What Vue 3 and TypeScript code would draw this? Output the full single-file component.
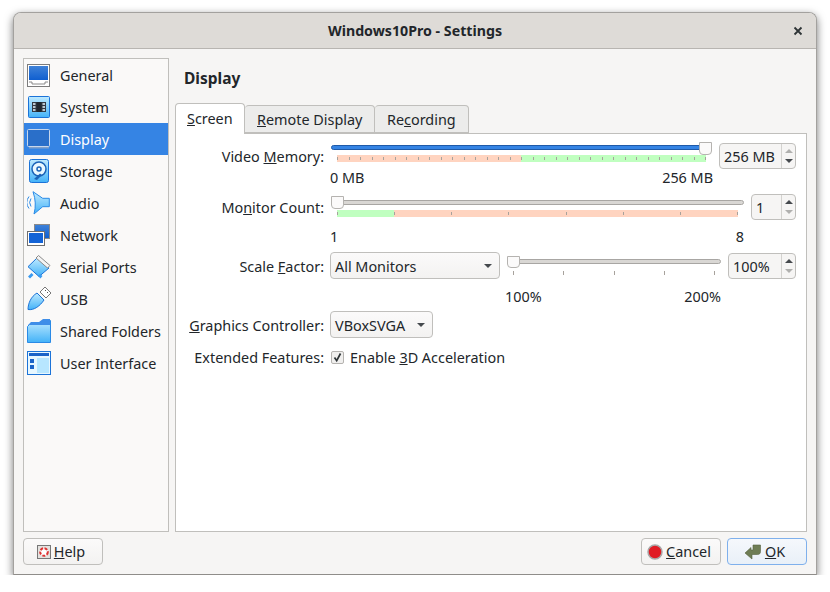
<script lang="ts" setup>
const nav = [
  'General', 'System', 'Display', 'Storage', 'Audio',
  'Network', 'Serial Ports', 'USB', 'Shared Folders', 'User Interface',
]
const active = 'Display'
</script>

<template>
  <div class="window">
    <header class="titlebar">
      <span class="title">Windows10Pro - Settings</span>
      <svg class="close" width="10" height="10" viewBox="0 0 10 10">
        <path d="M1.5 1.5l7 7M8.5 1.5l-7 7" stroke="#2e3436" stroke-width="1.8" fill="none" />
      </svg>
    </header>

    <div class="body">
      <div class="main">
        <ul class="sidebar">
          <li v-for="item in nav" :key="item" class="nav-item" :class="{ active: item === active }">
            <svg class="nav-icon" width="24" height="24" viewBox="0 0 24 24">
              <defs>
                <linearGradient id="blue" x1="0" y1="0" x2="0" y2="1">
                  <stop offset="0" stop-color="#3f82d8" />
                  <stop offset="1" stop-color="#0f5fd0" />
                </linearGradient>
                <linearGradient id="sky" x1="0" y1="0" x2="0" y2="1">
                  <stop offset="0" stop-color="#bfeaff" />
                  <stop offset="1" stop-color="#43b2f8" />
                </linearGradient>
              </defs>
              <template v-if="item === 'General'">
                <rect x="0.5" y="1.5" width="22" height="22" fill="#fff" stroke="#7c7c7c" />
                <rect x="2" y="3" width="19" height="14" fill="url(#blue)" />
                <path d="M2 19h3v2h13v-2h3" fill="none" stroke="#8a8a8a" />
              </template>
              <template v-else-if="item === 'System'">
                <rect x="1.5" y="1.5" width="21" height="21" rx="1" fill="url(#sky)" stroke="#1b73d8" />
                <rect x="5" y="7" width="14" height="10" fill="#333a44" />
                <rect x="9.5" y="7" width="5" height="10" fill="#20262e" />
                <path d="M6 9h2.500M6 12h2.500M6 15h2.500M15.500 9H18M15.500 12H18M15.500 15H18" stroke="#eaf8ff" stroke-width="1.300" />
              </template>
              <template v-else-if="item === 'Display'">
                <path d="M2 19h20v2.500H2z" fill="#7f9fca" />
                <rect x="0.5" y="2.500" width="22" height="17" rx="1" fill="#2a6fc9" stroke="#c8d7ec" />
              </template>
              <template v-else-if="item === 'Storage'">
                <rect x="2.500" y="0.500" width="19" height="23" rx="2" fill="url(#sky)" stroke="#1b73d8" />
                <circle cx="12" cy="10" r="7" fill="#eaf8ff" stroke="#1b63b8" stroke-width="1.500" />
                <circle cx="12" cy="10" r="2" fill="none" stroke="#1b63b8" stroke-width="1.500" />
                <path d="M7 20l6-5.500 2 1.500-5 5z" fill="#1b63b8" />
              </template>
              <template v-else-if="item === 'Audio'">
                <path d="M6 .7L15.700 7.300h6.600v8.400h-6.600L7 23Q10 12 6 .7z" fill="url(#sky)" stroke="#2a8ae6" />
                <path d="M4 7.500a7 7 0 0 0 0 8M2 5.500a10 10 0 0 0 0 12" fill="none" stroke="#2a8ae6" />
              </template>
              <template v-else-if="item === 'Network'">
                <rect x="7.500" y="1.500" width="15" height="14" fill="url(#blue)" stroke="#8a8a8a" />
                <rect x="0.500" y="8.500" width="17" height="14" fill="#fff" stroke="#6f6f6f" />
                <rect x="2" y="10" width="14" height="10" fill="#1363d6" />
              </template>
              <template v-else-if="item === 'Serial Ports'">
                <path d="M1 11.700L10 3l12 10-10 8.500z" fill="url(#sky)" stroke="#1b73d8" />
                <path d="M11.500 .5L23 10.500l-2.500 2.500L9 3z" fill="#f4f4f4" stroke="#8a8a8a" />
                <path d="M1 21.500l3.500-3.500 2 2-3.500 3.500zM11 21l2-2 2.500 2-2 2.500z" fill="#3a9af0" />
              </template>
              <template v-else-if="item === 'USB'">
                <path d="M1 22.500c0-6 3-13 9-16.500l7 7c-4 6-10 10.500-16 9.500z" fill="url(#sky)" stroke="#1b73d8" />
                <path d="M13 5l5-5 6 6-5 5z" fill="#fff" stroke="#777" />
                <path d="M18 4l1-1M20 6l1-1" stroke="#555" />
              </template>
              <template v-else-if="item === 'Shared Folders'">
                <path d="M0.500 23.500V7.500l4-4h8l4-2h7v22z" fill="url(#sky)" stroke="#2a8ae6" />
                <path d="M12 3l4-3h7v6H1l3-3z" fill="#3f8ee8" />
              </template>
              <template v-else>
                <rect x="0.500" y="0.500" width="23" height="23" fill="#e7f7ff" stroke="#1b73d8" />
                <rect x="2" y="2" width="20" height="3" fill="#1b63c8" />
                <rect x="10" y="7" width="12" height="15" fill="#b7e6ff" />
                <rect x="3" y="8" width="4" height="4" fill="#1b63c8" />
                <rect x="3" y="14" width="4" height="4" fill="#1b63c8" />
              </template>
            </svg>
            <span>{{ item }}</span>
          </li>
        </ul>

        <section class="content">
          <h2 class="heading">Display</h2>
          <div class="tabs">
            <div class="tab current"><u>S</u>creen</div>
            <div class="tab"><u>R</u>emote Display</div>
            <div class="tab">Re<u>c</u>ording</div>
          </div>
          <div class="pane">
            <div class="form">
              <label class="lbl">Video <u>M</u>emory:</label>
              <div class="ctl">
                <div class="slider vm-slider">
                  <div class="track filled" />
                  <div class="thumb at-end" />
                  <div class="bar bar-half">
                    <i v-for="n in 33" :key="n" />
                  </div>
                </div>
                <div class="spin w77">
                  <span class="val">256 MB</span>
                  <span class="arrows"><b class="up off" /><b class="down" /></span>
                </div>
              </div>

              <span />
              <div class="range vm"><span>0 MB</span><span>256 MB</span></div>

              <label class="lbl">Mo<u>n</u>itor Count:</label>
              <div class="ctl">
                <div class="slider mon-slider">
                  <div class="track" />
                  <div class="thumb" />
                  <div class="bar bar-mon">
                    <i v-for="n in 8" :key="n" />
                  </div>
                </div>
                <div class="spin w45">
                  <span class="val">1</span>
                  <span class="arrows"><b class="up" /><b class="down off" /></span>
                </div>
              </div>

              <span />
              <div class="range mon"><span>1</span><span>8</span></div>

              <label class="lbl">Scale <u>F</u>actor:</label>
              <div class="ctl scale">
                <div class="combo wide">All Monitors<b class="caret" /></div>
                <div class="slider small">
                  <div class="track" />
                  <div class="thumb" />
                  <div class="plain-ticks">
                    <i v-for="n in 5" :key="n" />
                  </div>
                </div>
                <div class="spin w68">
                  <span class="val">100%</span>
                  <span class="arrows"><b class="up" /><b class="down off" /></span>
                </div>
              </div>

              <span />
              <div class="range pct"><span>100%</span><span>200%</span></div>

              <label class="lbl"><u>G</u>raphics Controller:</label>
              <div class="ctl">
                <div class="combo narrow">VBoxSVGA<b class="caret" /></div>
              </div>

              <label class="lbl">Extended Features:</label>
              <div class="ctl last">
                <span class="check">
                  <svg width="11" height="11" viewBox="0 0 11 11">
                    <path d="M2.500 5.500l2.200 3.200L8.500 1.500" fill="none" stroke="#2e3436" stroke-width="1.700" />
                  </svg>
                </span>
                <span>Enable <u>3</u>D Acceleration</span>
              </div>
            </div>
          </div>
        </section>
      </div>

      <footer class="footer">
        <button class="btn">
          <svg width="14" height="14" viewBox="0 0 14 14">
            <rect x="0.500" y="0.500" width="13" height="13" fill="#e4e2df" stroke="#777" />
            <circle cx="7" cy="7" r="3.800" fill="#fff" stroke="#d33" stroke-width="2" stroke-dasharray="3 1.500" />
          </svg>
          <span><u>H</u>elp</span>
        </button>
        <span class="spacer" />
        <button class="btn">
          <svg width="16" height="16" viewBox="0 0 16 16">
            <circle cx="8" cy="8" r="7" fill="#e01b24" stroke="#a8a8a8" stroke-width="1.500" />
          </svg>
          <span><u>C</u>ancel</span>
        </button>
        <button class="btn default">
          <svg width="17" height="16" viewBox="0 0 17 16">
            <path d="M8 1h7.500v6.500c0 2-1 3-3 3H7V15L0 9l6-5.500V6h2z" fill="#6e7d55" stroke="#55613f" stroke-width=".6" />
          </svg>
          <span><u>O</u>K</span>
        </button>
      </footer>
    </div>
  </div>
</template>

<style>
html, body {
  background: #fff;
}
</style>

<style scoped>
* {
  box-sizing: border-box;
}

.window {
  width: 804px;
  height: 563px;
  margin: 12px 0 0 13px;
  display: flex;
  flex-direction: column;
  background: #f6f5f4;
  border: 1px solid #a3a19e;
  border-bottom-color: #8f8d8a;
  border-radius: 8px 8px 0 0;
  box-shadow: 0 3px 9px rgba(0, 0, 0, 0.55);
  font-family: "Noto Sans", sans-serif;
  font-size: 14.4px;
  color: #22262a;
  overflow: hidden;
}

.titlebar {
  height: 36px;
  flex: none;
  display: flex;
  align-items: center;
  justify-content: center;
  position: relative;
  padding-bottom: 1px;
  background: #dedbd7;
  border-bottom: 1px solid #b8b5b1;
}

.title {
  font-weight: 700;
  font-size: 14.200px;
}

.close {
  position: absolute;
  right: 13px;
  top: 13px;
}

.body {
  flex: 1;
  display: flex;
  flex-direction: column;
  padding: 9px 9px 9px 9px;
  min-height: 0;
}

.main {
  flex: 1;
  display: flex;
  gap: 6px;
  min-height: 0;
}

.sidebar {
  width: 146px;
  flex: none;
  margin: 0;
  padding: 0;
  list-style: none;
  background: #faf9f8;
  border: 1px solid #c0bfbc;
}

.nav-item {
  height: 32px;
  display: flex;
  align-items: center;
  padding-left: 3px;
  gap: 9px;
}

.nav-item.active {
  background: #3584e4;
  color: #fff;
}

.nav-icon {
  flex: none;
}

.content {
  flex: 1;
  display: flex;
  flex-direction: column;
  min-width: 0;
}

.heading {
  margin: 0;
  height: 45px;
  padding: 9px 0 0 9px;
  font-size: 15.500px;
  line-height: 22px;
  font-weight: 700;
}

.tabs {
  display: flex;
  align-items: flex-end;
  height: 30px;
  position: relative;
  z-index: 1;
}

.tab {
  height: 28px;
  padding: 4px 0 0 12px;
  background: #ececeb;
  border: 1px solid #c0bfbc;
  border-left: 0;
  white-space: nowrap;
}

.tab.current {
  height: 31px;
  margin-bottom: -1px;
  padding: 5px 0 0 11px;
  width: 70px;
  background: #fff;
  border: 1px solid #c0bfbc;
  border-bottom: 0;
  border-radius: 4px 4px 0 0;
}

.tab:nth-child(2) {
  width: 130px;
  border-radius: 4px 4px 0 0;
}

.tab:nth-child(3) {
  width: 94px;
  border-radius: 4px 4px 0 0;
}

.pane {
  flex: 1;
  background: #fff;
  border: 1px solid #c0bfbc;
  padding: 9px 10px 0;
}

.form {
  display: grid;
  grid-template-columns: 138px 466px;
  grid-template-rows: 26px 25px 26px 32px 27px 32px 27px 38px;
  column-gap: 6px;
}

.lbl {
  align-self: center;
  text-align: right;
  line-height: 20px;
  padding-top: 2px;
  white-space: nowrap;
}

.ctl {
  display: flex;
  gap: 6px;
  align-items: stretch;
}

.ctl.last {
  align-items: center;
  padding-left: 1px;
  gap: 6px;
}

.slider {
  flex: 1;
  position: relative;
  margin: 0 1px;
}

.vm-slider {
  padding-top: 2px;
}

.mon-slider {
  padding-top: 6px;
}

.track {
  height: 5px;
  background: #d9d7d4;
  border: 1px solid #a8a6a3;
  border-radius: 3px;
}

.track.filled {
  background: #3584e4;
  border-color: #1f5aa8;
}

.thumb {
  position: absolute;
  left: 0;
  top: 2px;
  width: 13px;
  height: 13px;
  background: #fbfafa;
  border: 1px solid #b5b3b0;
  border-radius: 0 0 4px 4px;
}

.vm-slider .thumb {
  top: -1px;
}

.thumb.at-end {
  left: auto;
  right: 0;
}

.bar {
  height: 7px;
  margin: 5px 6px 0;
  display: flex;
  justify-content: space-between;
  align-items: center;
}

.bar i,
.plain-ticks i {
  width: 1px;
  height: 3px;
  background: #a7a29c;
}

.bar-half {
  background: linear-gradient(to right, #ffd4c0 50%, #c0ffc0 50%);
}

.bar-mon {
  background: linear-gradient(to right, #c0ffc0 14.300%, #ffd4c0 14.300%);
}

.plain-ticks {
  display: flex;
  justify-content: space-between;
  margin: 7px 6px 0;
}

.plain-ticks i {
  height: 4px;
}

.spin {
  flex: none;
  display: flex;
  align-items: center;
  height: 26px;
  background: #f6f5f4;
  border: 1px solid #c0bfbc;
  border-radius: 4px;
  padding-left: 4px;
}

.w77 { width: 77px; }
.w45 { width: 45px; }
.w68 { width: 68px; margin-top: 1px; }

.val {
  flex: 1;
}

.arrows {
  width: 14px;
  height: 100%;
  flex: none;
  border-left: 1px solid #d3d2cf;
  display: flex;
  flex-direction: column;
  align-items: center;
  justify-content: center;
  gap: 6px;
}

.arrows b {
  width: 0;
  height: 0;
  border-left: 4px solid transparent;
  border-right: 4px solid transparent;
}

.up {
  border-bottom: 4px solid #45494d;
}

.down {
  border-top: 4px solid #45494d;
}

.up.off {
  border-bottom-color: #b0b0ae;
}

.down.off {
  border-top-color: #b0b0ae;
}

.range {
  display: flex;
  justify-content: space-between;
  line-height: 16px;
  padding-top: 1px;
}

.range.vm {
  padding-right: 83px;
}

.range.mon {
  padding-top: 9px;
  padding-right: 52px;
}

.range.pct {
  padding: 10px 75px 0 175px;
}

.scale {
  gap: 7px;
}

.scale .slider {
  margin: 0;
  padding-top: 7px;
}

.scale .thumb {
  top: 4px;
  height: 12px;
}

.combo {
  flex: none;
  height: 27px;
  display: flex;
  align-items: center;
  justify-content: space-between;
  padding: 1px 7px 0 4px;
  background: linear-gradient(#fbfafa, #f3f2f1);
  border: 1px solid #c0bfbc;
  border-radius: 4px;
}

.wide {
  width: 170px;
}

.narrow {
  width: 103px;
}

.caret {
  width: 0;
  height: 0;
  border-left: 4px solid transparent;
  border-right: 4px solid transparent;
  border-top: 4px solid #45494d;
}

.check {
  width: 13px;
  height: 13px;
  display: flex;
  align-items: center;
  justify-content: center;
  background: #f0efee;
  border: 1px solid #b5b3b0;
  border-radius: 2px;
}

.footer {
  flex: none;
  display: flex;
  gap: 6px;
  margin-top: 6px;
}

.spacer {
  flex: 1;
}

.btn {
  width: 80px;
  height: 27px;
  display: flex;
  align-items: center;
  justify-content: center;
  gap: 3px;
  padding: 0 4px 0 0;
  font: inherit;
  color: inherit;
  background: linear-gradient(#fbfafa, #f3f2f1);
  border: 1px solid #c0bfbc;
  border-radius: 4px;
}

.btn.default {
  background: linear-gradient(#f5f8fc, #e9f0f8);
  border-color: #7fb0ec;
}
</style>
